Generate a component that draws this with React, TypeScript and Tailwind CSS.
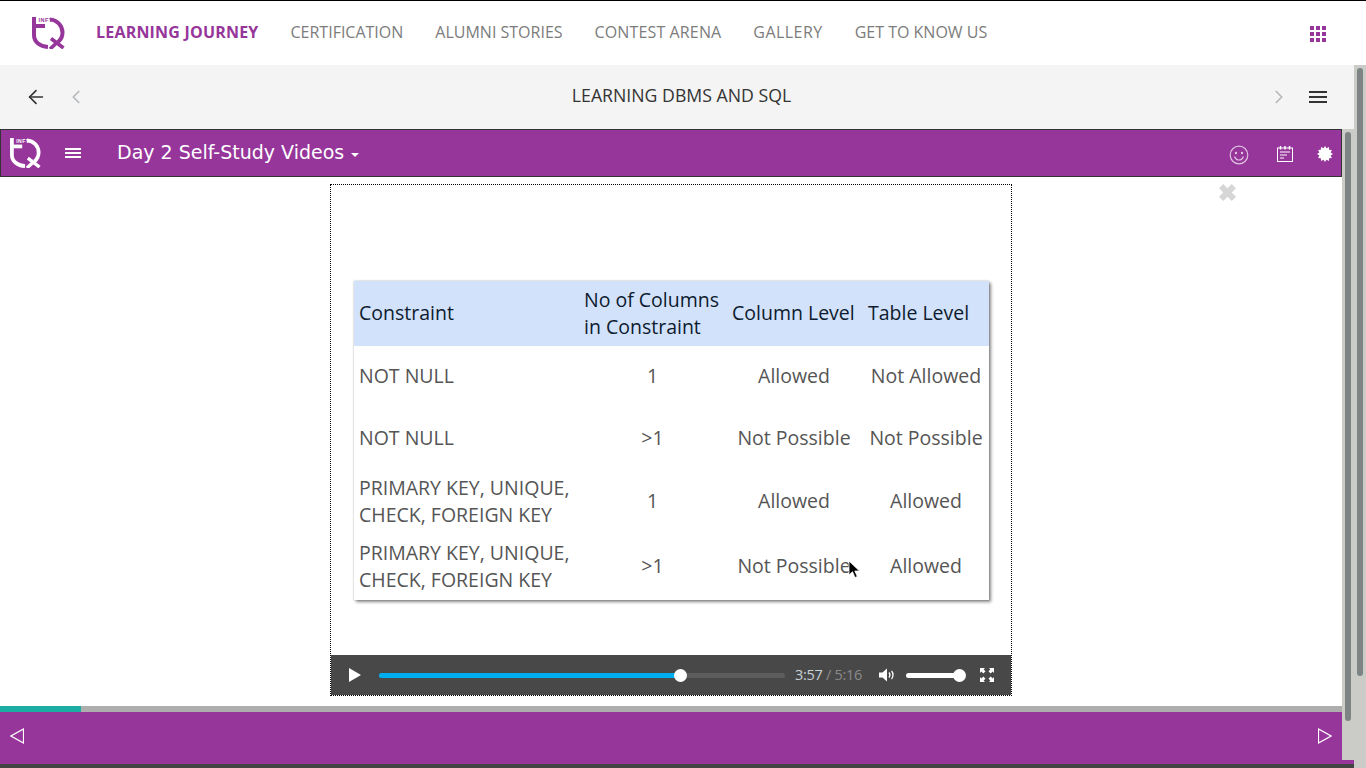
import { ArrowLeft, ChevronLeft, ChevronRight } from "lucide-react";

const navItems = [
  { label: "CERTIFICATION", cls: "" },
  { label: "ALUMNI STORIES", cls: "" },
  { label: "CONTEST ARENA", cls: "tracking-[0.13px]" },
  { label: "GALLERY", cls: "tracking-[0.45px]" },
  { label: "GET TO KNOW US", cls: "" },
];

const rows = [
  { name: ["NOT NULL"], cols: "1", column: "Allowed", table: "Not Allowed", h: "h-[61px]" },
  { name: ["NOT NULL"], cols: ">1", column: "Not Possible", table: "Not Possible", h: "h-[63px]" },
  { name: ["PRIMARY KEY, UNIQUE,", "CHECK, FOREIGN KEY"], cols: "1", column: "Allowed", table: "Allowed", h: "h-[63px]" },
  { name: ["PRIMARY KEY, UNIQUE,", "CHECK, FOREIGN KEY"], cols: ">1", column: "Not Possible", table: "Allowed", h: "h-[67px]" },
];

function Logo({ className, color }: { className: string; color: string }) {
  return (
    <svg viewBox="0 0 33 32" className={className} fill="none" stroke={color}>
      <path d="M2 0V18C2 25 8 29.500 16 30" strokeWidth="4" />
      <path d="M2 9H13" strokeWidth="4" />
      <path d="M18 2.500C25.500 3 30.500 9 30.500 15.500C30.500 19.500 29 22.500 26 25" strokeWidth="4" />
      <path d="M19 21.500L31.500 31M25 25.500L18 32" strokeWidth="3.600" />
      <text x="6.500" y="4.800" fontSize="5.500" fontWeight="700" fill={color} stroke="none" fontFamily="'Liberation Sans', sans-serif" letterSpacing="0.500">
        INFY
      </text>
    </svg>
  );
}

function GridIcon() {
  return (
    <div className="grid grid-cols-3 gap-[2px] w-4 h-4 mt-px">
      {Array.from({ length: 9 }).map((_, i) => (
        <span key={i} className="bg-[#96359a] w-1 h-1" />
      ))}
    </div>
  );
}

function Bars({ className, bar }: { className: string; bar: string }) {
  return (
    <div className={`${className} flex flex-col justify-between shrink-0`}>
      <span className={`${bar} h-[2px]`} />
      <span className={`${bar} h-[2px]`} />
      <span className={`${bar} h-[2px]`} />
    </div>
  );
}

function Smiley() {
  return (
    <svg viewBox="0 0 20 20" className="w-5 h-5 opacity-70" fill="none" stroke="white" strokeWidth="1.200">
      <circle cx="10" cy="10" r="8.800" />
      <circle cx="7" cy="8" r="0.600" fill="white" />
      <circle cx="13" cy="8" r="0.600" fill="white" />
      <path d="M5.500 11.500c1 2.500 2.700 3.500 4.500 3.500s3.500-1 4.500-3.500" />
    </svg>
  );
}

function Notes() {
  return (
    <svg viewBox="0 0 16 16" className="w-4 h-4" fill="none" stroke="white" strokeWidth="1">
      <rect x="0.500" y="2" width="15" height="13.500" />
      <path d="M3.500 0v3.500M8 0v3.500M12.500 0v3.500" strokeWidth="1.500" />
      <path d="M3 6h10M3 9h7M3 12h4" />
    </svg>
  );
}

function Burst() {
  const points = Array.from({ length: 24 }).map((_, i) => {
    const r = i % 2 === 0 ? 8.500 : 6.200;
    const a = (i * Math.PI) / 12;
    return `${8.500 + r * Math.cos(a)},${8.500 + r * Math.sin(a)}`;
  });
  return (
    <svg viewBox="0 0 17 17" className="w-4 h-4">
      <polygon points={points.join(" ")} fill="white" />
    </svg>
  );
}

function Scrollbar({ height, thumb }: { height: string; thumb: string }) {
  return (
    <div className={`${height} bg-[#cbcbc8] w-3 shrink-0 flex justify-center pt-[3px]`}>
      <div className={`${thumb} w-[6px] rounded-full bg-[#7e8384]`} />
    </div>
  );
}

function Player() {
  return (
    <div className="h-10 bg-[#484848] flex items-center shrink-0 relative">
      <svg viewBox="0 0 12 14" className="w-3 h-[14px] ml-[18px]">
        <path d="M0 0l12 7-12 7z" fill="white" />
      </svg>
      <div className="ml-[18px] w-[406px] h-[5px] rounded-full bg-[#5c5c5c] relative">
        <div className="h-full w-[301px] rounded-full bg-[#00aeef]" />
        <div className="absolute left-[295px] top-[-4px] w-[13px] h-[13px] rounded-full bg-white" />
      </div>
      <span className="ml-[10px] w-[70px] text-[14.500px] tracking-[-0.3px] text-[#c9d3da] whitespace-nowrap">
        3:57 <span className="text-[#8b8b8b]">/ 5:16</span>
      </span>
      <svg viewBox="0 0 17 14" className="w-[17px] h-[14px] ml-[14px]" fill="none">
        <path d="M0 4.500h3.500L8 0.500v13l-4.500-4H0z" fill="white" />
        <path d="M10 4.500c1.200 1.500 1.200 3.500 0 5M12.500 3c2 2.200 2 5.800 0 8" stroke="white" strokeWidth="1.300" />
      </svg>
      <div className="ml-[10px] w-[54px] h-[5px] rounded-full bg-white relative">
        <div className="absolute right-[-6px] top-[-4px] w-[13px] h-[13px] rounded-full bg-white" />
      </div>
      <svg viewBox="0 0 14 14" className="w-[14px] h-[14px] ml-5" fill="white">
        <path d="M0 0h5L3.600 1.400 5.500 3.300 3.300 5.500 1.400 3.600 0 5zM14 0v5l-1.400-1.400-1.900 1.900-2.200-2.200 1.900-1.900L9 0zM0 14V9l1.400 1.400 1.900-1.900 2.200 2.200-1.900 1.900L5 14zM14 14H9l1.400-1.400-1.900-1.900 2.200-2.200 1.900 1.900L14 9z" />
      </svg>
    </div>
  );
}

function Slide() {
  return (
    <div className="w-[635px] h-[319px] bg-white shadow-[2px_2px_3px_rgba(0,0,0,0.45),0_0_2px_rgba(0,0,0,0.25)] text-[19.500px] leading-[27px] text-[#555]">
      <div className="h-[65px] pb-[2px] bg-[#d3e2fb] text-[#0d1b2e] grid grid-cols-[225px_146px_138px_126px] items-center">
        <span className="pl-[5px]">Constraint</span>
        <span className="pl-[5px]">
          No of Columns
          <br />
          in Constraint
        </span>
        <span className="pl-[7px] whitespace-nowrap">Column Level</span>
        <span className="pl-[5px] whitespace-nowrap">Table Level</span>
      </div>
      {rows.map((r, i) => (
        <div key={i} className={`${r.h} pb-[2px] grid grid-cols-[225px_146px_138px_126px] items-center`}>
          <span className="pl-[5px] whitespace-nowrap">
            {r.name.map((n) => (
              <span key={n} className="block">
                {n}
              </span>
            ))}
          </span>
          <span className="text-center pl-[1px]">{r.cols}</span>
          <span className="text-center whitespace-nowrap">{r.column}</span>
          <span className="text-center whitespace-nowrap">{r.table}</span>
        </div>
      ))}
    </div>
  );
}

export default function App() {
  return (
    <div className="w-[1366px] h-[768px] overflow-hidden flex flex-col bg-white border-t border-black font-['Open_Sans',sans-serif]">
      {/* Site nav */}
      <header className="h-[64px] shrink-0 flex items-center pl-[32px] pr-[40px]">
        <Logo className="w-[33px] h-[32px] mb-[1px]" color="#96359a" />
        <nav className="ml-[31px] flex items-center gap-8 flex-1 text-base text-[#7c7c7c] mb-[3px]">
          <a className="font-bold tracking-[0.2px] text-[#96359a]">LEARNING JOURNEY</a>
          {navItems.map((n) => (
            <a key={n.label} className={n.cls}>
              {n.label}
            </a>
          ))}
        </nav>
        <GridIcon />
      </header>

      <div className="flex flex-1 min-h-0">
        <div className="flex-1 min-w-0 flex flex-col">
          {/* Course title bar */}
          <div className="h-16 shrink-0 bg-[#f4f4f4] flex items-center pl-[25px] pr-[27px] text-[#333]">
            <ArrowLeft size={22} strokeWidth={1.800} />
            <ChevronLeft size={22} strokeWidth={1.800} className="ml-[18px] text-[#b5b8bb]" />
            <div className="flex-1 text-center text-[17.700px] mb-[3px] pl-[8px] text-[#333]">LEARNING DBMS AND SQL</div>
            <ChevronRight size={22} strokeWidth={1.800} className="mr-[19px] text-[#b5b8bb]" />
            <Bars className="w-[18px] h-[12px]" bar="bg-[#333]" />
          </div>

          <div className="flex h-[631px] shrink-0">
            <div className="flex-1 min-w-0 flex flex-col">
              {/* Module toolbar */}
              <div className="h-12 shrink-0 bg-[#96359a] border border-[#333] flex items-center pl-[9px] pr-[8px] text-white">
                <Logo className="w-[31px] h-[30px]" color="white" />
                <Bars className="ml-[24px] w-4 h-[10px]" bar="bg-white" />
                <span className="ml-[36px] mb-[2px] font-['DejaVu_Sans',sans-serif] text-[19px]">Day 2 Self-Study Videos</span>
                <span className="ml-[7px] mt-[3px] w-0 h-0 border-x-4 border-x-transparent border-t-4 border-t-white" />
                <div className="flex-1" />
                <span className="mt-[4px]">
                  <Smiley />
                </span>
                <span className="ml-[28px] mt-px">
                  <Notes />
                </span>
                <span className="ml-6 mt-px">
                  <Burst />
                </span>
              </div>

              {/* Video stage */}
              <div className="flex-1 min-h-0 relative flex justify-center pt-[7px]">
                <span className="absolute left-[1219px] top-[7px] text-[#d6d6d6]">
                  <svg viewBox="3 3 12 12" className="w-[17px] h-[17px]">
                    <path d="M3 6l3-3 3 3 3-3 3 3-3 3 3 3-3 3-3-3-3 3-3-3 3-3z" fill="currentColor" />
                  </svg>
                </span>
                <div className="w-[682px] h-[512px] border border-dotted border-black flex flex-col relative">
                  <div className="flex-1 flex items-start justify-center pt-[96px] pl-[1px]">
                    <Slide />
                  </div>
                  <Player />
                  <svg viewBox="0 0 12 19" className="absolute left-[517px] top-[375px] w-3 h-[19px]">
                    <path d="M1 1v14l3.500-3.300 2.500 5.800 2.300-1-2.500-5.500h4.700z" fill="black" stroke="white" strokeWidth="0.800" />
                  </svg>
                </div>
              </div>

              {/* Progress */}
              <div className="h-[6px] shrink-0 bg-[#aeaeae]">
                <div className="h-full w-[81px] bg-[#1cada5]" />
              </div>

              {/* Slide pager */}
              <div className="h-12 shrink-0 bg-[#96359a] flex items-center justify-between px-[10px]">
                <svg viewBox="0 0 14 16" className="w-[14px] h-4">
                  <path d="M13.500 1v14L1 8z" fill="none" stroke="white" strokeWidth="1.200" />
                </svg>
                <svg viewBox="0 0 14 16" className="w-[14px] h-4">
                  <path d="M.5 1v14L13 8z" fill="none" stroke="white" strokeWidth="1.200" />
                </svg>
              </div>
            </div>
            <Scrollbar height="h-full" thumb="h-[589px]" />
          </div>

          <div className="h-1 shrink-0 bg-[#96359a]" />
          <div className="h-1 shrink-0 bg-[#444]" />
        </div>
        <Scrollbar height="h-full" thumb="h-[608px]" />
      </div>
    </div>
  );
}
